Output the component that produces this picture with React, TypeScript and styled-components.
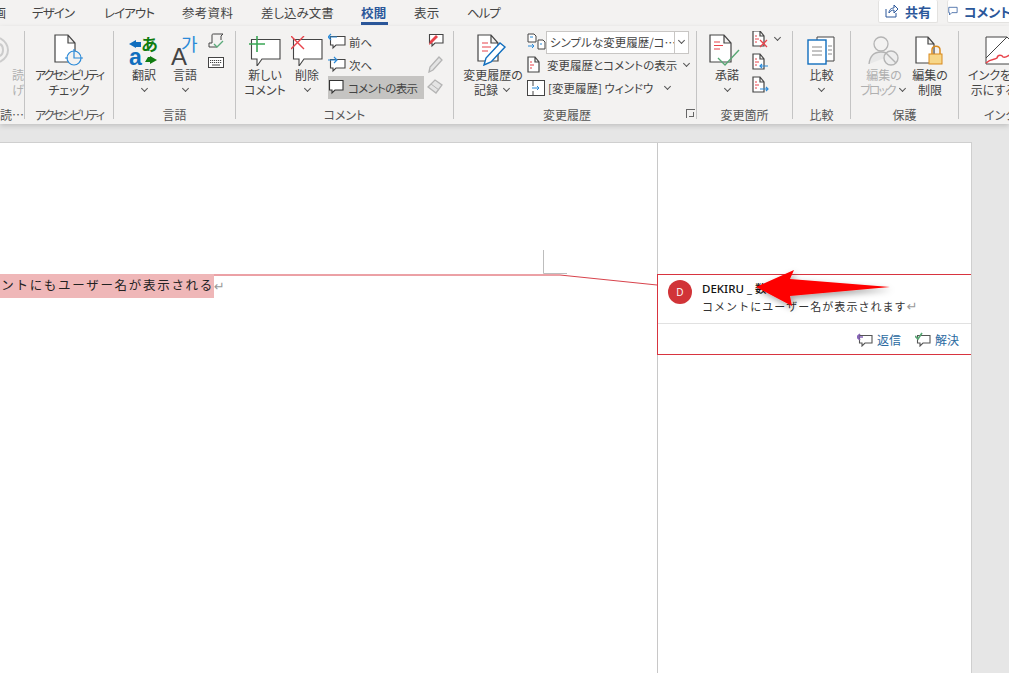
import type { ReactNode } from "react";
import styled, { createGlobalStyle } from "styled-components";

const GlobalStyle = createGlobalStyle`
	html, body {
		margin: 0;
		height: 673px;
		overflow: hidden;
		background: #e6e6e6;
	}
	body {
		font-family: "Noto Sans CJK JP", "Noto Sans", sans-serif;
		font-feature-settings: "palt";
		color: #444;
	}
`;

const INK = "#444";
const RED = "#e8434b";
const BLUE = "#2b8ad8";
const GRAY = "#b4b4b4";

/* ---------- icons ---------- */

const PageSvg = ({ w = 30, h = 34 }: { w?: number; h?: number }) => {
	const fold = Math.round(w * 0.35);
	return (
		<path
			d={`M1 1H${w - fold}L${w - 1} ${fold + 1}V${h - 1}H1Z M${w - fold} 1V${fold + 1}H${w - 1}`}
			fill="#fff"
			stroke={INK}
			strokeWidth="1.2"
		/>
	);
};

const Bubble = ({ x = 0, y = 0, w = 28, h = 22, stroke = INK }: any) => {
	const tx = Math.round(w * 0.22);
	const tw = Math.max(3, Math.round(w * 0.18));
	const th = Math.round(h * 0.33);
	return (
		<path
			d={`M${x + 0.5} ${y + 0.5}H${x + w}V${y + h}H${x + tx + tw}L${x + tx} ${y + h + th}V${y + h}H${x + 0.5}Z`}
			fill="#fff"
			stroke={stroke}
			strokeWidth="1.1"
		/>
	);
};

const A11yIcon = () => (
	<svg width="30" height="32" viewBox="0 0 30 32">
		<PageSvg w={22} h={29} />
		<circle cx="20" cy="24" r="7" fill="#f3f2f1" stroke={BLUE} strokeWidth="1.2" />
		<path d="M20 15V24H29M11 24H14" fill="none" stroke={BLUE} strokeWidth="1.2" />
	</svg>
);

const TranslateIcon = () => (
	<svg width="30" height="31" viewBox="0 0 30 31">
		<path d="M0 9L7 5V7H12V12H7V13Z" fill="#106ebe" />
		<path d="M28 25L21 29V27H16L19 22H21V21Z" fill="#107c10" />
		<text x="0" y="30" fontSize="23" fontWeight="700" fill="#106ebe" fontFamily="Liberation Sans">a</text>
		<text x="12" y="16" fontSize="17" fontWeight="700" fill="#107c10" fontFamily="Noto Sans CJK JP">あ</text>
	</svg>
);

const LanguageIcon = () => (
	<svg width="30" height="30" viewBox="0 0 30 30">
		<text x="1" y="29" fontSize="24" fill={INK} fontFamily="Liberation Sans">A</text>
		<text x="11" y="15" fontSize="18" fill={BLUE} fontFamily="Noto Sans CJK KR">가</text>
	</svg>
);

const NewCommentIcon = () => (
	<svg width="32" height="30" viewBox="0 0 32 30">
		<Bubble x={2} y={3} w={29} h={20} />
		<path d="M0 8H16M8 0V16" stroke="#3aa655" strokeWidth="1.6" />
	</svg>
);

const DeleteCommentIcon = () => (
	<svg width="32" height="30" viewBox="0 0 32 30">
		<Bubble x={2} y={3} w={29} h={20} />
		<path d="M0 0L13 13M13 0L0 13" stroke={RED} strokeWidth="1.4" />
	</svg>
);

const ArrowBubble = ({ back }: { back?: boolean }) => (
	<svg width="18" height="18" viewBox="0 0 18 18">
		<Bubble x={2} y={3} w={15} h={9} />
		<path d={back ? "M0 4H9M3 1L0 4L3 7" : "M0 4H9M6 1L9 4L6 7"} fill="none" stroke={BLUE} strokeWidth="1.2" />
	</svg>
);

const PlainBubble = () => (
	<svg width="16" height="17" viewBox="0 0 16 17">
		<Bubble x={1} y={1} w={14} h={10} stroke="#333" />
	</svg>
);

const InkBubble = () => (
	<svg width="17" height="16" viewBox="0 0 17 16">
		<Bubble x={2} y={1} w={14} h={9} />
		<path d="M2 12L3 8L9 2L11 4L5 10Z" fill={RED} />
	</svg>
);

const PenGray = () => (
	<svg width="17" height="18" viewBox="0 0 17 18">
		<path d="M2 17L3 12L12 2L15 5L6 15Z" fill="#e4e4e4" stroke={GRAY} strokeWidth="1.3" />
	</svg>
);

const EraserGray = () => (
	<svg width="17" height="16" viewBox="0 0 17 16">
		<path d="M1 8L8 1L15 6L9 14Z" fill="#e4e4e4" stroke={GRAY} strokeWidth="1.3" />
		<path d="M4 5L12 11" stroke={GRAY} />
	</svg>
);

const ScriptIcon = () => (
	<svg width="16" height="16" viewBox="0 0 16 16">
		<path d="M4 10V2C4 1 5 1 6 1H15L13 3V7M4 10H1V14H9" fill="none" stroke={INK} />
		<path d="M6 11L9 14L15 8" fill="none" stroke="#5aaa7a" strokeWidth="1.3" />
	</svg>
);

const KeyboardIcon = () => (
	<svg width="16" height="11" viewBox="0 0 16 11">
		<rect x="0.5" y="0.5" width="15" height="10" fill="#fff" stroke={INK} />
		<path d="M2 3.5H14M2 5.5H14" stroke={INK} strokeDasharray="1.2 .8" />
		<path d="M4 8H12" stroke={INK} />
	</svg>
);

const TrackIcon = () => (
	<svg width="34" height="32" viewBox="0 0 34 32">
		<g transform="translate(1 0)"><PageSvg w={22} h={28} /></g>
		<path d="M6 9H12M6 13H15M6 17H12" stroke={RED} strokeWidth="1.1" />
		<path d="M8 31L10 24L24 9L29 13L15 28Z" fill="#fff" stroke="#106ebe" strokeWidth="1.4" />
	</svg>
);

const MiniPage = ({ children }: { children?: ReactNode }) => (
	<svg width="17" height="18" viewBox="0 0 17 18">
		<PageSvg w={13} h={17} />
		<path d="M3 6H5M3 9H7M3 12H5" stroke={RED} strokeWidth="1" />
		{children}
	</svg>
);

const BalloonToggle = () => (
	<svg width="19" height="18" viewBox="0 0 19 18">
		<path d="M1 1H7L9 3V9H1ZM11 7H16L18 9V16H11Z" fill="#fff" stroke={INK} />
		<path d="M3 4H6M13 11H15" stroke={BLUE} />
		<path d="M1 13H7M5 11L7 13L5 15" fill="none" stroke={BLUE} />
	</svg>
);

const PaneIcon = () => (
	<svg width="18" height="17" viewBox="0 0 18 17">
		<rect x="0.5" y="0.5" width="17" height="15" fill="#fff" stroke={INK} />
		<path d="M6 1V6M6 11V15" stroke={INK} />
		<path d="M5 8H12M10 6L12 8L10 10" fill="none" stroke={BLUE} />
	</svg>
);

const AcceptIcon = () => (
	<svg width="36" height="32" viewBox="0 0 36 32">
		<PageSvg w={23} h={29} />
		<path d="M5 8H11M5 11.5H14M5 15H11" stroke={RED} strokeWidth="1.1" />
		<path d="M9 24L16 31L30 16" fill="none" stroke="#57a773" strokeWidth="1.4" />
	</svg>
);

const CompareIcon = () => (
	<svg width="30" height="30" viewBox="0 0 30 30">
		<path d="M10 1H27V25H10Z" fill="#fff" stroke={INK} />
		<path d="M21 10H25M21 14H25M21 18H25" stroke="#888" />
		<rect x="1" y="4" width="18" height="24" fill="#fff" stroke="#106ebe" strokeWidth="1.4" />
		<path d="M5 11H15M5 15H15M5 19H15" stroke="#888" />
	</svg>
);

const BlockAuthorIcon = () => (
	<svg width="32" height="30" viewBox="0 0 32 30">
		<circle cx="13" cy="8" r="7" fill="#f3f2f1" stroke={GRAY} strokeWidth="1.3" />
		<path d="M1 28C2 19 7 16 13 16C17 16 20 17 22 20" fill="#e8e8e8" stroke={GRAY} strokeWidth="1.3" />
		<circle cx="23" cy="22" r="7" fill="#eee" stroke={GRAY} strokeWidth="1.4" />
		<path d="M18 17L28 27" stroke={GRAY} strokeWidth="1.4" />
	</svg>
);

const RestrictIcon = () => (
	<svg width="30" height="30" viewBox="0 0 30 30">
		<PageSvg w={20} h={28} />
		<path d="M17 18V14C17 9 25 9 25 14V18" fill="none" stroke="#d98a1f" strokeWidth="1.5" />
		<rect x="14" y="18" width="13" height="10" fill="#f7d789" stroke="#d98a1f" />
	</svg>
);

const InkIcon = () => (
	<svg width="30" height="30" viewBox="0 0 30 30">
		<path d="M1 1H22L29 8V28H1Z" fill="#fff" stroke={INK} />
		<path d="M1 22L22 1" stroke={INK} />
		<path d="M1 27C6 22 10 24 12 22C13 18 17 19 18 21C21 23 24 18 29 17" fill="none" stroke={RED} strokeWidth="1.5" />
	</svg>
);

const ChatSmall = ({ color, check }: { color: string; check?: boolean }) => (
	<svg width="16" height="15" viewBox="0 0 16 15">
		<Bubble x={2} y={3} w={13} h={8} stroke="#555" />
		<path
			d={check ? "M0 4L3 7L7 1" : "M0 5H6M3 2L0 5L3 8"}
			fill="none"
			stroke={color}
			strokeWidth="1.6"
		/>
	</svg>
);

/* ---------- page frame ---------- */

const Screen = styled.div`
	position: relative;
	width: 1009px;
	height: 673px;
	overflow: hidden;
	background: #e6e6e6;
`;

const TabBar = styled.div`
	display: flex;
	align-items: flex-start;
	height: 26px;
	background: #f3f2f1;
	position: relative;
`;

const Tab = styled.div<{ $left: number; $w: number; $ls?: number; $active?: boolean }>`
	margin-left: ${p => p.$left}px;
	width: ${p => p.$w}px;
	flex: none;
	height: 25px;
	line-height: 25px;
	font-size: 12.5px;
	letter-spacing: ${p => p.$ls ?? 0.3}px;
	white-space: nowrap;
	font-weight: ${p => (p.$active ? 700 : 400)};
	color: ${p => (p.$active ? "#2b579a" : "#444")};
	border-bottom: ${p => (p.$active ? "3px solid #2b579a" : "none")};
	box-sizing: border-box;
`;

const Clipped = styled.div`
	width: 6px;
	flex: none;
	height: 25px;
	line-height: 25px;
	font-size: 12.5px;
	white-space: nowrap;
	overflow: hidden;
	display: flex;
	justify-content: flex-end;
`;

const TopActions = styled.div`
	margin-left: auto;
	display: flex;
	gap: 9px;
	margin-right: -3px;
`;

const TopButton = styled.div<{ $w: number }>`
	width: ${p => p.$w}px;
	height: 23px;
	display: flex;
	align-items: center;
	justify-content: center;
	gap: 6px;
	box-sizing: border-box;
	background: #fff;
	border: 1px solid #e3e2e0;
	border-top: none;
	border-radius: 2px;
	font-size: 13px;
	font-weight: 700;
	color: #2b579a;
	white-space: nowrap;
	overflow: hidden;
`;

const Ribbon = styled.div`
	display: flex;
	height: 98px;
	background: #f3f2f1;
	box-shadow: 0 2px 5px rgba(0, 0, 0, 0.16);
	position: relative;
	z-index: 1;
`;

const Group = styled.section<{ $w: number; $last?: boolean }>`
	flex: none;
	width: ${p => p.$w}px;
	box-sizing: border-box;
	height: 93px;
	margin-top: 5px;
	background: ${p => (p.$last ? "none" : "linear-gradient(#c4c4c4, #c4c4c4) right top / 1px 88px no-repeat")};
	display: flex;
	flex-direction: column;
	position: relative;
	overflow: hidden;
`;

const GroupBody = styled.div<{ $pad?: number }>`
	flex: 1;
	display: flex;
	align-items: flex-start;
	padding-left: ${p => p.$pad ?? 0}px;
	min-height: 0;
`;

const GroupLabel = styled.div<{ $align?: string; $pad?: number; $pr?: number }>`
	height: 19px;
	line-height: 19px;
	font-size: 12px;
	text-align: ${p => p.$align ?? "center"};
	padding-left: ${p => p.$pad ?? 0}px;
	padding-right: ${p => p.$pr ?? 1}px;
	color: #555;
	white-space: nowrap;
`;

const Tight = styled.span`
	letter-spacing: -2px;
`;

const LargeButton = styled.div<{ $w: number; $off?: boolean; $start?: boolean; $end?: boolean; $ml?: number }>`
	flex: none;
	width: ${p => p.$w}px;
	margin-left: ${p => p.$ml ?? 0}px;
	display: flex;
	flex-direction: column;
	align-items: ${p => (p.$start ? "flex-start" : p.$end ? "flex-end" : "center")};
	color: ${p => (p.$off ? "#b0b0b0" : "#444")};
	font-size: 12px;
	line-height: 15px;
	text-align: center;
	white-space: nowrap;
`;

const IconSlot = styled.div<{ $ml?: number }>`
	height: 34px;
	margin-top: 1px;
	margin-bottom: 1px;
	margin-left: ${p => p.$ml ?? 0}px;
	display: flex;
	align-items: flex-end;
	justify-content: center;
`;

const Chevron = styled.span<{ $ml?: number }>`
	display: inline-block;
	width: 4px;
	height: 4px;
	margin: 0 3px 3px ${p => p.$ml ?? 3}px;
	border-right: 1px solid #555;
	border-bottom: 1px solid #555;
	transform: rotate(45deg);
`;

const ChevronLine = styled.div`
	height: 15px;
	display: flex;
	align-items: center;
	justify-content: center;
`;

const Stack = styled.div<{ $gap?: number; $top?: number; $ml?: number }>`
	display: flex;
	flex-direction: column;
	gap: ${p => p.$gap ?? 4}px;
	margin-top: ${p => p.$top ?? 0}px;
	margin-left: ${p => p.$ml ?? 0}px;
`;

const SmallRow = styled.div<{ $h?: number; $w?: number; $on?: boolean; $ls?: number; $gap?: number }>`
	display: flex;
	align-items: center;
	gap: ${p => p.$gap ?? 3}px;
	height: ${p => p.$h ?? 22}px;
	width: ${p => (p.$w ? `${p.$w}px` : "auto")};
	background: ${p => (p.$on ? "#c5c4c2" : "transparent")};
	font-size: 11.5px;
	letter-spacing: ${p => p.$ls ?? 0}px;
	color: #444;
	white-space: nowrap;
`;

const ComboBox = styled.div`
	display: flex;
	height: 23px;
	width: 143px;
	margin-left: -3px;
	box-sizing: border-box;
	background: #fff;
	border: 1px solid #c8c6c4;
	font-size: 11.5px;
	line-height: 21px;
	white-space: nowrap;
`;

const ComboText = styled.div`
	flex: 1;
	padding-left: 3px;
	overflow: hidden;
`;

const ComboArrow = styled.div`
	width: 13px;
	border-left: 1px solid #c8c6c4;
	display: flex;
	align-items: center;
	justify-content: center;
`;

const Launcher = styled.div`
	position: absolute;
	right: 2px;
	bottom: 6px;
	width: 8px;
	height: 8px;
	border-left: 1px solid #666;
	border-top: 1px solid #666;
	&::after {
		content: "";
		display: block;
		width: 4px;
		height: 4px;
		margin: 2px;
		border-right: 1px solid #666;
		border-bottom: 1px solid #666;
	}
`;

/* ---------- document ---------- */

const Workspace = styled.main`
	padding-top: 18px;
`;

const Page = styled.div`
	display: flex;
	width: 972px;
	height: 532px;
	box-sizing: border-box;
	background: #fff;
	border-top: 1px solid #cfcfcf;
	border-right: 1px solid #cfcfcf;
`;

const BodyColumn = styled.div`
	width: 657px;
	flex: none;
	padding-top: 131px;
	box-sizing: border-box;
`;

const MarkedLine = styled.div`
	display: flex;
	align-items: center;
	height: 24px;
`;

const Highlight = styled.div`
	width: 214px;
	height: 24px;
	background: #efb7b8;
	display: flex;
	justify-content: flex-end;
	overflow: hidden;
	font-size: 12.5px;
	line-height: 21px;
	letter-spacing: 1.7px;
	color: #222;
	white-space: nowrap;
	font-feature-settings: "palt" 0;
`;

const ReturnMark = styled.span`
	font-size: 13px;
	line-height: 15px;
	color: #999;
	font-family: "DejaVu Sans", sans-serif;
`;

const MarkupColumn = styled.div`
	flex: 1;
	padding-top: 131px;
	border-left: 1px solid #c8c8c8;
	min-width: 0;
`;

const CommentCard = styled.article`
	margin-left: -1px;
	height: 81px;
	box-sizing: border-box;
	border: 1px solid #d8343f;
	border-right: none;
	background: #fff;
	display: flex;
	flex-direction: column;
`;

const CommentMain = styled.div`
	height: 49px;
	box-sizing: border-box;
	display: flex;
	gap: 10px;
	padding: 5px 0 0 10px;
	border-bottom: 1px solid #e1e1e1;
`;

const Avatar = styled.div`
	width: 24px;
	height: 24px;
	border-radius: 50%;
	flex: none;
	background: #d13438;
	color: #fff;
	font-size: 10px;
	line-height: 24px;
	text-align: center;
	font-family: "Open Sans", sans-serif;
`;

const Author = styled.div`
	font-size: 11.5px;
	line-height: 17px;
	font-weight: 500;
	color: #111;
	white-space: nowrap;
	font-family: "Noto Sans", "Noto Sans CJK JP", sans-serif;
`;

const CommentText = styled.div`
	margin-top: 2px;
	font-size: 11px;
	line-height: 15px;
	letter-spacing: 1.05px;
	color: #333;
	white-space: nowrap;
	font-feature-settings: "palt" 0;
`;

const CommentActions = styled.div`
	flex: 1;
	display: flex;
	align-items: center;
	justify-content: flex-end;
	gap: 14px;
	padding-right: 12px;
`;

const CommentAction = styled.div`
	display: flex;
	align-items: center;
	gap: 4px;
	font-size: 12px;
	color: #2b6a9f;
`;

const OverlaySvg = styled.svg`
	position: absolute;
	left: 0;
	top: 0;
	pointer-events: none;
	z-index: 2;
`;

function App() {
	return (
		<Screen>
			<GlobalStyle />
			<TabBar>
				<Clipped>
					<span>描画</span>
				</Clipped>
				<Tab $left={26} $w={42} $ls={-0.95}>デザイン</Tab>
				<Tab $left={30} $w={49} $ls={-0.9}>レイアウト</Tab>
				<Tab $left={29} $w={52}>参考資料</Tab>
				<Tab $left={27} $w={73} $ls={0}>差し込み文書</Tab>
				<Tab $left={27} $w={27} $active>
					校閲
				</Tab>
				<Tab $left={26} $w={26}>表示</Tab>
				<Tab $left={27} $w={33} $ls={-1}>ヘルプ</Tab>
				<TopActions>
					<TopButton $w={60}>
						<svg width="14" height="14" viewBox="0 0 14 14">
							<path d="M1 5V13H11V9M4 9C4 5 7 4 9 4V1L13 5L9 9V6C7 6 5 7 4 9Z" fill="none" stroke="#2b579a" />
						</svg>
						共有
					</TopButton>
					<TopButton $w={65}>
						<svg width="13" height="13" viewBox="0 0 13 13">
							<path d="M1 1H12V8H5L2 11V8H1Z" fill="none" stroke="#2b579a" />
						</svg>
						コメント
					</TopButton>
				</TopActions>
			</TabBar>

			<Ribbon>
				<Group $w={25}>
					<GroupBody>
						<LargeButton $w={24} $off $end>
							<IconSlot>
								<svg width="24" height="30" viewBox="0 0 24 30">
									<path d="M0 3C5 6 8 10 8 15C8 20 5 24 0 27M0 9C2 10 3 12 3 15C3 18 2 20 0 21" fill="none" stroke="#ccc" strokeWidth="2" transform="translate(0 -1)" />
								</svg>
							</IconSlot>
							<div>読</div>
							<div>げ</div>
						</LargeButton>
					</GroupBody>
					<GroupLabel $align="right">読…</GroupLabel>
				</Group>

				<Group $w={89}>
					<GroupBody>
						<LargeButton $w={88}>
							<IconSlot>
								<A11yIcon />
							</IconSlot>
							<Tight>アクセシビリティ</Tight>
							<div>チェック</div>
						</LargeButton>
					</GroupBody>
					<GroupLabel>
						<Tight>アクセシビリティ</Tight>
					</GroupLabel>
				</Group>

				<Group $w={122}>
					<GroupBody $pad={13}>
						<LargeButton $w={34}>
							<IconSlot>
								<TranslateIcon />
							</IconSlot>
							<div>翻訳</div>
							<ChevronLine>
								<Chevron />
							</ChevronLine>
						</LargeButton>
						<LargeButton $w={40} $ml={4}>
							<IconSlot>
								<LanguageIcon />
							</IconSlot>
							<div>言語</div>
							<ChevronLine>
								<Chevron />
							</ChevronLine>
						</LargeButton>
						<Stack $gap={8} $top={2} $ml={3}>
							<ScriptIcon />
							<KeyboardIcon />
						</Stack>
					</GroupBody>
					<GroupLabel>言語</GroupLabel>
				</Group>

				<Group $w={218}>
					<GroupBody $pad={8}>
						<LargeButton $w={42}>
							<IconSlot>
								<NewCommentIcon />
							</IconSlot>
							<div>新しい</div>
							<div>コメント</div>
						</LargeButton>
						<LargeButton $w={42}>
							<IconSlot>
								<DeleteCommentIcon />
							</IconSlot>
							<div>削除</div>
							<ChevronLine>
								<Chevron />
							</ChevronLine>
						</LargeButton>
						<Stack $gap={0} $top={-1}>
							<SmallRow $h={23} $w={96}>
								<ArrowBubble back />
								前へ
							</SmallRow>
							<SmallRow $h={23} $w={96}>
								<ArrowBubble />
								次へ
							</SmallRow>
							<SmallRow $h={23} $w={96} $on $ls={-0.7} $gap={4}>
								<PlainBubble />
								コメントの表示
							</SmallRow>
						</Stack>
						<Stack $gap={6} $top={2} $ml={3}>
							<InkBubble />
							<PenGray />
							<EraserGray />
						</Stack>
					</GroupBody>
					<GroupLabel>コメント</GroupLabel>
				</Group>

				<Group $w={243}>
					<GroupBody $pad={8}>
						<LargeButton $w={62}>
							<IconSlot>
								<TrackIcon />
							</IconSlot>
							<div>変更履歴の</div>
							<ChevronLine>
								記録
								<Chevron $ml={6} />
							</ChevronLine>
						</LargeButton>
						<Stack $gap={0} $ml={3} $top={-1}>
							<SmallRow $h={24}>
								<BalloonToggle />
								<ComboBox>
									<ComboText>シンプルな変更履歴/コ…</ComboText>
									<ComboArrow>
										<Chevron />
									</ComboArrow>
								</ComboBox>
							</SmallRow>
							<SmallRow $h={22}>
								<MiniPage />
								変更履歴とコメントの表示
								<Chevron $ml={4} />
							</SmallRow>
							<SmallRow $h={24}>
								<PaneIcon />
								[変更履歴] ウィンドウ
								<Chevron $ml={9} />
							</SmallRow>
						</Stack>
					</GroupBody>
					<GroupLabel $pr={17}>変更履歴</GroupLabel>
					<Launcher />
				</Group>

				<Group $w={96}>
					<GroupBody $pad={15}>
						<LargeButton $w={30}>
							<IconSlot>
								<AcceptIcon />
							</IconSlot>
							<div>承諾</div>
							<ChevronLine>
								<Chevron />
							</ChevronLine>
						</LargeButton>
						<Stack $gap={5} $top={-1} $ml={10}>
							<SmallRow $h={18}>
								<MiniPage>
									<path d="M8 10L15 17M15 10L8 17" stroke={RED} strokeWidth="1.3" />
								</MiniPage>
								<Chevron />
							</SmallRow>
							<SmallRow $h={18}>
								<MiniPage>
									<path d="M8 13H16M10 11L8 13L10 15" fill="none" stroke={BLUE} strokeWidth="1.2" />
								</MiniPage>
							</SmallRow>
							<SmallRow $h={18}>
								<MiniPage>
									<path d="M8 13H16M14 11L16 13L14 15" fill="none" stroke={BLUE} strokeWidth="1.2" />
								</MiniPage>
							</SmallRow>
						</Stack>
					</GroupBody>
					<GroupLabel>変更箇所</GroupLabel>
				</Group>

				<Group $w={58}>
					<GroupBody>
						<LargeButton $w={57}>
							<IconSlot>
								<CompareIcon />
							</IconSlot>
							<div>比較</div>
							<ChevronLine>
								<Chevron />
							</ChevronLine>
						</LargeButton>
					</GroupBody>
					<GroupLabel>比較</GroupLabel>
				</Group>

				<Group $w={108}>
					<GroupBody $pad={8}>
						<LargeButton $w={50} $off>
							<IconSlot>
								<BlockAuthorIcon />
							</IconSlot>
							<div>編集の</div>
							<ChevronLine>
								<Tight>ブロック</Tight>
								<Chevron $ml={5} />
							</ChevronLine>
						</LargeButton>
						<LargeButton $w={42}>
							<IconSlot>
								<RestrictIcon />
							</IconSlot>
							<div>編集の</div>
							<div>制限</div>
						</LargeButton>
					</GroupBody>
					<GroupLabel>保護</GroupLabel>
				</Group>

				<Group $w={60} $last>
					<GroupBody $pad={9}>
						<LargeButton $w={60} $start>
							<IconSlot $ml={17}>
								<InkIcon />
							</IconSlot>
							<div>インクを非表</div>
							<div>&nbsp;示にする</div>
						</LargeButton>
					</GroupBody>
					<GroupLabel $align="left" $pad={25}>インク</GroupLabel>
				</Group>
			</Ribbon>

			<Workspace>
				<Page>
					<BodyColumn>
						<MarkedLine>
							<Highlight>コメントにもユーザー名が表示される</Highlight>
							<ReturnMark>↵</ReturnMark>
						</MarkedLine>
					</BodyColumn>
					<MarkupColumn>
						<CommentCard>
							<CommentMain>
								<Avatar>D</Avatar>
								<div>
									<Author>DEKIRU _ 数</Author>
									<CommentText>
										コメントにユーザー名が表示されます
										<ReturnMark>↵</ReturnMark>
									</CommentText>
								</div>
							</CommentMain>
							<CommentActions>
								<CommentAction>
									<ChatSmall color="#8764b8" />
									返信
								</CommentAction>
								<CommentAction>
									<ChatSmall color="#57a773" check />
									解決
								</CommentAction>
							</CommentActions>
						</CommentCard>
					</MarkupColumn>
				</Page>
			</Workspace>

			<OverlaySvg width="1009" height="673" viewBox="0 0 1009 673">
				<defs>
					<filter id="arrowShadow" x="-20%" y="-50%" width="140%" height="220%">
						<feDropShadow dx="2" dy="3" stdDeviation="3" floodColor="#000" floodOpacity="0.35" />
					</filter>
				</defs>
				<path d="M543.5 250V273.5H567" fill="none" stroke="#bdbdbd" />
				<path d="M214 275H560L657 285" fill="none" stroke="#d8434c" />
				<polygon
					points="756,287 794,270 790,279 890,287 790,296 792,306"
					fill="#fe0000"
					filter="url(#arrowShadow)"
				/>
			</OverlaySvg>
		</Screen>
	);
}

export default App;
